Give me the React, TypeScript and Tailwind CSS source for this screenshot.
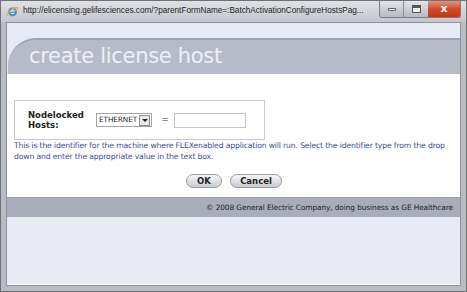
import React from 'react'

const tahoma = { fontFamily: '"DejaVu Sans", Verdana, sans-serif' }

function IeIcon() {
  return (
    <svg width="13" height="13" viewBox="0 0 16 16" className="shrink-0">
      <circle cx="8" cy="8.5" r="5.5" fill="#3f8fd8" />
      <circle cx="8" cy="8.5" r="3" fill="#e9f3fb" />
      <rect x="4" y="8" width="8" height="1.6" fill="#3f8fd8" />
      <path d="M2 13 C 0 10, 8 3, 14 3 C 16 4, 12 7, 10 7" stroke="#e8b23a" strokeWidth="1.4" fill="none" />
    </svg>
  )
}

export default function App() {
  return (
    <div className="w-[467px] h-[292px] overflow-hidden bg-[#b9bcc2] border border-[#6f7175] flex flex-col">
      {/* title bar */}
      <div className="h-[21px] flex items-center bg-gradient-to-b from-[#dfe1e5] to-[#c3c6cc] pl-[5px] pr-[5px]">
        <IeIcon />
        <span
          className="ml-[4px] flex-1 min-w-0 overflow-hidden text-[8.2px] text-[#1e1e1e] whitespace-nowrap"
          style={{ fontFamily: '"Liberation Sans", Arial, sans-serif' }}
        >
          http://elicensing.gelifesciences.com/?parentFormName=:BatchActivationConfigureHostsPag...
        </span>
        <div className="shrink-0 ml-[3px] flex h-[17px] self-start border border-[#7a7d82] border-t-0 rounded-b-[3px] overflow-hidden">
          <div className="w-[24px] bg-gradient-to-b from-[#e2e4e8] to-[#b6bac2] border-r border-[#8a8d92] flex items-center justify-center">
            <div className="w-[8px] h-[3px] bg-white border border-[#666]" />
          </div>
          <div className="w-[24px] bg-gradient-to-b from-[#e2e4e8] to-[#b6bac2] flex items-center justify-center">
            <div className="w-[9px] h-[8px] border border-[#555] border-t-[3px] bg-[#eee]" />
          </div>
          <div
            className="w-[32px] bg-gradient-to-b from-[#e8927a] via-[#d2482a] to-[#c23818] flex items-center justify-center text-white font-bold text-[11px]"
            style={tahoma}
          >
            x
          </div>
        </div>
      </div>

      {/* client area */}
      <div className="flex-1 mx-[5px] mb-[5px] border border-[#8e9197] bg-[#e7eaf3] flex flex-col">
        <div className="h-[15px]" />
        {/* header band */}
        <div className="h-[36px] ml-[1px] bg-[#b7bbc8] border-t-2 border-[#9ea2af] rounded-tl-[28px] flex items-center pl-[21px]">
          <span
            className="text-[21px] text-[#eef0f5] leading-none pb-[2px]"
            style={{ fontFamily: '"DejaVu Sans", Verdana, sans-serif', letterSpacing: '-0.3px' }}
          >
            create license host
          </span>
        </div>

        {/* body */}
        <div className="bg-white h-[123px] pt-[26px] pl-[7px] pr-[6px]" style={tahoma}>
          <div className="w-[251px] h-[40px] border border-[#c9c9c9] flex items-center pl-[13px]">
            <div className="w-[68px] text-[8.5px] font-bold text-[#222] leading-[10px]">
              Nodelocked<br />Hosts:
            </div>
            <div className="flex items-center h-[14px] border border-[#a5a5a5] bg-white">
              <span className="text-[7.2px] text-[#222] px-[2px] leading-none">ETHERNET</span>
              <div className="w-[11px] h-[11px] border border-[#8c8c8c] bg-[#e9e9e9] flex items-center justify-center mr-[1px]">
                <div className="w-0 h-0 border-l-[3px] border-r-[3px] border-t-[3px] border-l-transparent border-r-transparent border-t-[#222]" />
              </div>
            </div>
            <span className="ml-[9px] text-[9px] text-[#333]">=</span>
            <div className="ml-[5px] w-[72px] h-[15px] border border-[#c4c4c4] bg-white" />
          </div>
          <div className="mt-0 text-[7.7px] leading-[11px] text-[#3c4e9e] whitespace-nowrap tracking-[-0.15px]">
            This is the identifier for the machine where FLEXenabled application will run. Select the identifier type from the drop
            <br />
            down and enter the appropriate value in the text box.
          </div>
          <div className="flex justify-center gap-[8px] mt-[12px]">
            <button className="w-[36px] h-[14px] rounded-full border border-[#9a9ca2] bg-gradient-to-b from-[#f6f7f9] to-[#c9ccd3] text-[8.5px] font-bold text-[#222] leading-none">
              OK
            </button>
            <button className="w-[52px] h-[14px] rounded-full border border-[#9a9ca2] bg-gradient-to-b from-[#f6f7f9] to-[#c9ccd3] text-[8.5px] font-bold text-[#222] leading-none">
              Cancel
            </button>
          </div>
        </div>

        {/* footer */}
        <div className="h-[20px] bg-[#a9adba] border-t border-[#9da1ae] flex items-center justify-end pr-[7px]" style={tahoma}>
          <span className="text-[7.4px] text-[#222] tracking-[-0.1px]">
            © 2008 General Electric Company, doing business as GE Healthcare
          </span>
        </div>
        <div className="flex-1 bg-[#e8ebf4] border-b border-white" />
      </div>
    </div>
  )
}
